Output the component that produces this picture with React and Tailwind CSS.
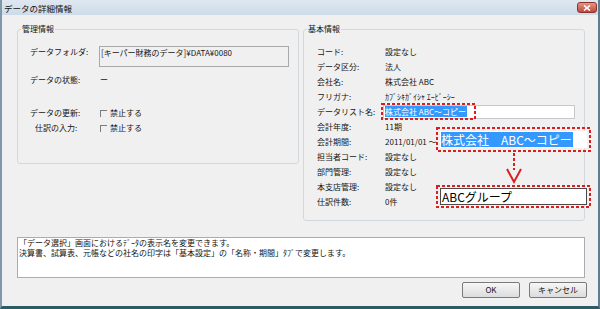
import React from "react";

function DashedBox({ w, h }) {
  return (
    <svg className="absolute left-0 top-0" width={w} height={h}>
      <rect x="1" y="1" width={w - 2} height={h - 2} fill="none" stroke="#dc1e1e" strokeWidth="2" strokeDasharray="3 2" />
    </svg>
  );
}

function Check() {
  return <span className="inline-block w-[7px] h-[7px] border-t border-l border-[#7d7d7d] shrink-0" />;
}

export default function App() {
  return (
    <div className="relative w-[600px] h-[309px] overflow-hidden bg-[#f0f0f0] font-['Noto_Sans_CJK_JP','Liberation_Sans',sans-serif] text-[8px] leading-[10px] text-[#141414] flex flex-col border-l-2 border-r-2 border-b-[3px] border-l-[#8098ad] border-r-[#5f7d8f] border-b-[#2e5b68]">
      {/* title bar */}
      <div className="h-[15px] shrink-0 flex items-center justify-between bg-gradient-to-b from-[#dfe8f1] to-[#cddbe9] pl-[2px] pr-[1px]">
        <span className="text-[8.5px] leading-[12px] text-[#101010]">データの詳細情報</span>
        <div className="w-[20px] h-[11px] rounded-[3px] bg-gradient-to-b from-[#e3958a] to-[#c2453a] border border-[#8c3329] flex items-center justify-center">
          <svg width="8" height="6" viewBox="0 0 8 6">
            <path d="M1 0.5 L7 5.5 M7 0.5 L1 5.5" stroke="#fff" strokeWidth="1.6" />
          </svg>
        </div>
      </div>

      <div className="flex-1 pl-[15px] flex flex-col">
        {/* group boxes */}
        <div className="flex items-start gap-[4px] mt-[8px]">
          <fieldset className="w-[282px] h-[141px] border border-[#d3d8dc] rounded-[3px] p-0 m-0">
            <legend className="ml-[3px] px-[1px] leading-[12px]">管理情報</legend>
            <div className="pl-[12px] pt-[11px] flex flex-col">
              <div className="flex items-start">
                <span className="w-[69px] mt-[1px]">データフォルダ:</span>
                <div className="w-[190px] h-[21px] border border-[#a9a9a9] px-[1px] pt-[1px]">[キーパー財務のデータ]¥DATA¥0080</div>
              </div>
              <div className="flex items-start mt-[8px]">
                <span className="w-[69px]">データの状態:</span>
                <span className="pl-[1px]">ー</span>
              </div>
              <div className="flex items-center mt-[23px]">
                <span className="w-[69px]">データの更新:</span>
                <span className="ml-[1px] flex items-center gap-[3px]"><Check />禁止する</span>
              </div>
              <div className="flex items-center mt-[5px]">
                <span className="w-[69px] pl-[5px]">仕訳の入力:</span>
                <span className="ml-[1px] flex items-center gap-[3px]"><Check />禁止する</span>
              </div>
            </div>
          </fieldset>

          <fieldset className="w-[282px] h-[198px] border border-[#d3d8dc] rounded-[3px] p-0 m-0">
            <legend className="ml-[3px] px-[1px] leading-[12px]">基本情報</legend>
            <div className="pl-[13px] pt-[9px] flex flex-col">
              {[
                ["コード:", "設定なし"],
                ["データ区分:", "法人"],
                ["会社名:", "株式会社 ABC"],
                ["フリガナ:", "ｶﾌﾞｼｷｶﾞｲｼｬ ｴｰﾋﾞｰｼｰ"],
              ].map(([k, v]) => (
                <div key={k} className="h-[15px] flex items-center">
                  <span className="w-[68px]">{k}</span>
                  <span>{v}</span>
                </div>
              ))}
              <div className="h-[15px] flex items-center">
                <span className="w-[68px]">データリスト名:</span>
                <div className="-ml-[2px] w-[192px] h-[14px] bg-white border border-[#c5c9ce] flex items-center pl-[1px]">
                  <span className="bg-[#3399ff] text-white leading-[11px] pr-[1px]">株式会社 ABC～コピー</span>
                </div>
              </div>
              {[
                ["会計年度:", "11期"],
                ["会計期間:", "2011/01/01 ～"],
                ["担当者コード:", "設定なし"],
                ["部門管理:", "設定なし"],
                ["本支店管理:", "設定なし"],
                ["仕訳件数:", "0件"],
              ].map(([k, v]) => (
                <div key={k} className="h-[15px] flex items-center">
                  <span className="w-[68px]">{k}</span>
                  <span>{v}</span>
                </div>
              ))}
            </div>
          </fieldset>
        </div>

        {/* description */}
        <div className="mt-[16px] w-[568px] h-[41px] bg-white border border-[#a9acb0] px-[1px] leading-[10px]">
          <div>「データ選択」画面におけるﾃﾞｰﾀの表示名を変更できます。</div>
          <div>決算書、試算表、元帳などの社名の印字は「基本設定」の「名称・期間」ﾀﾌﾞで変更します。</div>
        </div>

        {/* buttons */}
        <div className="flex mt-[4px] ml-[445px] gap-[9px]">
          <button className="w-[58px] h-[16px] border border-[#7a7a7a] rounded-[2px] bg-gradient-to-b from-[#f7f7f7] to-[#dcdcdc] text-[8px] leading-[10px] flex items-center justify-center">OK</button>
          <button className="w-[58px] h-[16px] border border-[#7a7a7a] rounded-[2px] bg-gradient-to-b from-[#f7f7f7] to-[#dcdcdc] text-[8px] leading-[10px] flex items-center justify-center">キャンセル</button>
        </div>
      </div>

      {/* annotation: selection highlight */}
      <div className="absolute left-[379px] top-[103px] w-[95px] h-[17px]">
        <DashedBox w={95} h={17} />
      </div>

      {/* callout 1 */}
      <div className="absolute left-[434px] top-[127px] w-[155px] h-[25px] p-[4px]">
        <DashedBox w={155} h={25} />
        <div className="h-[17px] bg-white flex items-center pl-[1px]">
          <span className="bg-[#3399ff] text-white text-[12px] leading-[15px] pr-[1px]">株式会社　ABC～コピー</span>
        </div>
      </div>

      {/* arrow */}
      <svg className="absolute left-[502px] top-[151px]" width="20" height="34" viewBox="0 0 20 34">
        <path d="M10 2 L10 19" stroke="#dc1e1e" strokeWidth="2" strokeDasharray="3 2" fill="none" />
        <path d="M3 18 L10 31 L17 18" stroke="#dc1e1e" strokeWidth="2" fill="none" />
      </svg>

      {/* callout 2 */}
      <div className="absolute left-[434px] top-[185px] w-[155px] h-[23px] px-[4px] py-[3px]">
        <DashedBox w={155} h={23} />
        <div className="h-[17px] bg-white border border-[#4a4a4a] flex items-center pl-[1px] text-[12px] leading-[15px] text-black">ABCグループ</div>
      </div>
    </div>
  );
}
